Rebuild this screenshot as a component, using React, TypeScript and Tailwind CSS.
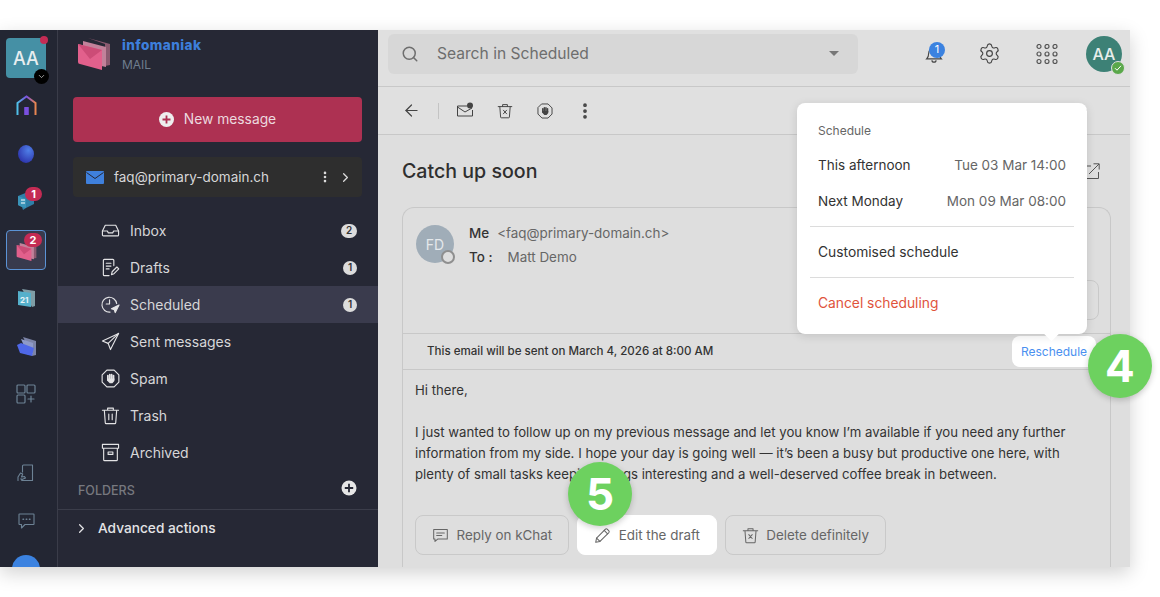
import {
  ArrowLeft,
  ChevronDown,
  ChevronRight,
  MoreVertical,
  Search,
  Settings,
} from "lucide-react";
import type { ReactNode } from "react";

function Ico({ size = 21, sw = 1.2, children }: { size?: number; sw?: number; children: ReactNode }) {
  return (
    <svg width={size} height={size} viewBox="0 0 20 20" fill="none" stroke="currentColor" strokeWidth={sw} strokeLinecap="round" strokeLinejoin="round">
      {children}
    </svg>
  );
}

const InboxIcon = () => (
  <Ico>
    <path d="M1.5 10.5 4.5 4.5h11l3 6v4.2a1 1 0 0 1-1 1h-15a1 1 0 0 1-1-1z" />
    <path d="M1.5 10.5h5.2l1 2h4.6l1-2h5.2" />
  </Ico>
);
const DraftIcon = () => (
  <Ico>
    <path d="M13.5 8V2.5a1 1 0 0 0-1-1h-9a1 1 0 0 0-1 1v15a1 1 0 0 0 1 1h5" />
    <path d="M5.5 5.5h5M5.5 8.5h5M5.5 11.5h3" />
    <path d="m11 17.5.7-3 5-5 2 2-5 5z" />
  </Ico>
);
const ScheduledIcon = () => (
  <Ico>
    <path d="M16.5 9a7.8 7.8 0 1 0-7 9" />
    <path d="M9 5v4.5H5.5" />
    <path d="m19 10.5-8 4 3 1 1 3z" fill="currentColor" />
  </Ico>
);
const SentIcon = () => (
  <Ico>
    <path d="M18.5 1.5 1.5 9.5l6 2.5 2.5 6.5z" />
    <path d="M18.5 1.5 7.5 12" />
  </Ico>
);
const HandStop = ({ size = 21, sw = 1.2 }: { size?: number; sw?: number }) => (
  <Ico size={size} sw={sw}>
    <path d="M6.2 1.2h7.600l5 5v7.600l-5 5H6.200l-5-5V6.200z" />
    <path d="M7.200 7v4M9.200 5.800V10M11.200 5.800V10M13.200 7v4" strokeWidth="1.800" />
    <path d="M6.400 10h7.700v2.500L12 15H9.200L6.400 12z" fill="currentColor" stroke="none" />
  </Ico>
);
const TrashIcon = () => (
  <Ico>
    <path d="M1.5 4.5h17M7 4.5V2.2h6v2.3M3.5 4.5l1 13a1 1 0 0 0 1 1h9a1 1 0 0 0 1-1l1-13" />
    <path d="M8.2 8.5v6M11.8 8.5v6" />
  </Ico>
);
const TrashX = ({ size = 18 }: { size?: number }) => (
  <Ico size={size}>
    <path d="M1.5 4.5h17M7 4.5V2h6v2.5M3.5 4.5l1 13a1 1 0 0 0 1 1h9a1 1 0 0 0 1-1l1-13" />
    <path d="m8 9 4 4.5M12 9l-4 4.5" />
  </Ico>
);
const ArchiveIcon = () => (
  <Ico>
    <path d="M1.5 1.5h17v4h-17zM2.8 5.5v12a1 1 0 0 0 1 1h12.400a1 1 0 0 0 1-1v-12" />
    <path d="M7.500 9.500h5v2.500h-5z" />
  </Ico>
);

const Badge = ({ children, wide }: { children: ReactNode; wide?: boolean }) => (
  <span className={`flex h-[14px] items-center justify-center rounded-full bg-[#dcdcdc] text-[10px] font-semibold text-[#333] ${wide ? "w-4" : "w-[14px]"}`}>
    {children}
  </span>
);

const MailLogo = ({ size = 34 }: { size?: number }) => (
  <svg width={size} height={size} viewBox="0 0 34 34">
    <path d="M11 2 33 8v21l-5 1V8z" fill="#8c5a70" />
    <path d="M6 5 29 11v20l-23-5z" fill="#c2819a" />
    <path d="M1 8 25 14v20L3 28a2 2 0 0 1-2-2z" fill="#e2608c" />
    <path d="M1 8 25 14 13 23z" fill="#cc4c77" />
  </svg>
);

const folders = [
  { label: "Inbox", icon: <InboxIcon />, badge: 2 },
  { label: "Drafts", icon: <DraftIcon />, badge: 1 },
  { label: "Scheduled", icon: <ScheduledIcon />, badge: 1, active: true },
  { label: "Sent messages", icon: <SentIcon /> },
  { label: "Spam", icon: <HandStop /> },
  { label: "Trash", icon: <TrashIcon /> },
  { label: "Archived", icon: <ArchiveIcon /> },
];

function Rail() {
  const slot = "relative flex h-10 w-10 shrink-0 items-center justify-center";
  return (
    <div className="flex w-[58px] shrink-0 flex-col items-center gap-2 overflow-hidden border-r border-[#3a3c49] bg-[#232633] pr-[5px] pt-2">
      <div className="relative flex h-10 w-10 shrink-0 items-center justify-center rounded bg-[#4590a5] text-[18px] font-medium text-[#e8eef0]">
        AA
        <span className="absolute right-[-2px] top-[-2px] h-2 w-2 rounded-full bg-[#c42b54]" />
        <span className="absolute bottom-[-6px] right-[-3px] flex h-[15px] w-[15px] items-center justify-center rounded-full bg-black text-[#ccc]">
          <ChevronDown size={9} />
        </span>
      </div>
      <div className={slot}>
        <svg width="21" height="21" viewBox="0 0 21 21" fill="none" className="mb-[2px]">
          <defs>
            <linearGradient id="homeg" x1="0" x2="1" y1="0" y2="0">
              <stop offset="0" stopColor="#4fc0e8" />
              <stop offset="0.5" stopColor="#7a4fe0" />
              <stop offset="1" stopColor="#e8864f" />
            </linearGradient>
          </defs>
          <path d="M1.500 20V8l9-6.500 9 6.500v12" stroke="url(#homeg)" strokeWidth="2" />
          <rect x="8.200" y="12" width="4.600" height="8" rx="0.500" fill="#7a4fe0" />
        </svg>
      </div>
      <div className={slot}>
        <svg width="18" height="20" viewBox="0 0 18 20">
          <defs>
            <radialGradient id="ball" cx="0.65" cy="0.3" r="0.8">
              <stop offset="0" stopColor="#4f7fe8" />
              <stop offset="1" stopColor="#2a2fa8" />
            </radialGradient>
          </defs>
          <ellipse cx="9" cy="10" rx="8" ry="9" fill="url(#ball)" />
        </svg>
      </div>
      <div className={slot}>
        <svg width="18" height="20" viewBox="0 0 18 20" className="mt-[-3px]">
          <path d="M1 5 11 1l6 3v9l-8 4-3 2-1-3-4-2z" fill="#2f7fa8" />
          <path d="M1 5l8 3v9l-4-1-4-2z" fill="#3a93b8" />
          <path d="M4 9h4M4 12h4" stroke="#fff" strokeWidth="1.200" />
        </svg>
        <span className="absolute right-[4px] top-[5px] flex h-[14px] w-[17px] items-center justify-center rounded-full bg-[#c42b54] text-[11px] font-bold text-white">1</span>
      </div>
      <div className="relative flex h-10 w-10 shrink-0 items-center justify-center rounded border border-[#5b93d6] bg-[#383a4d]">
        <MailLogo size={21} />
        <span className="absolute right-[3px] top-[2px] flex h-[14px] w-[18px] items-center justify-center rounded-full bg-[#c42b54] text-[11px] font-bold text-white">2</span>
      </div>
      <div className={slot}>
        <svg width="19" height="20" viewBox="0 0 19 20">
          <path d="M5 1 18 3v15l-3 1z" fill="#7f9da6" />
          <path d="M1 3l13 2v14L1 17z" fill="#55b0cb" />
          <text x="3" y="15" fontSize="8" fontWeight="700" fill="#e6f3f7" fontFamily="Inter, sans-serif">21</text>
        </svg>
      </div>
      <div className={slot}>
        <svg width="21" height="20" viewBox="0 0 21 20">
          <path d="M7 1l13 4v14l-4 1z" fill="#7c84a8" />
          <path d="M5 3l12 4v11l-5 1z" fill="#8f9ac8" />
          <path d="M1 9l4-2 13 5-2 8-12-3z" fill="#4f68e8" />
        </svg>
      </div>
      <div className={`${slot} text-[#6d8295]`}>
        <svg width="20" height="20" viewBox="0 0 20 20" fill="none" stroke="currentColor" strokeWidth="1.200" strokeLinecap="round">
          <rect x="1" y="1" width="8" height="8" rx="1" />
          <rect x="11" y="1" width="8" height="8" rx="1" />
          <rect x="1" y="11" width="8" height="8" rx="1" />
          <path d="M15 12v6M12 15h6" />
        </svg>
      </div>
      <div className={`${slot} mt-[31px] text-[#6d8295]`}>
        <svg width="18" height="18" viewBox="0 0 18 18" fill="none" stroke="currentColor" strokeWidth="1.100" strokeLinecap="round" strokeLinejoin="round">
          <path d="M5.500 8V2a1 1 0 0 1 1-1h9v13" />
          <path d="M15.500 14v2.500H6a2 2 0 0 1-2-2" />
          <path d="M1 16.500V13l2.500-4 2.200 1-1.200 3 3-.5 1 1.500-3.500 1.500" />
        </svg>
      </div>
      <div className={`${slot} text-[#6d8295]`}>
        <svg width="17" height="16" viewBox="0 0 17 16" fill="none" stroke="currentColor" strokeWidth="1.100" strokeLinejoin="round">
          <path d="M1.500 1h14a.5.5 0 0 1 .5.500V11a.5.5 0 0 1-.5.500H7L3.500 15v-3.500h-2A.5.5 0 0 1 1 11V1.500A.5.5 0 0 1 1.500 1z" />
          <path d="M5 6.200h.6M8.200 6.200h.6M11.400 6.200h.6" strokeWidth="1.400" strokeLinecap="round" />
        </svg>
      </div>
      <div className="mt-[6px] h-7 w-7 shrink-0 rounded-full bg-[#3b82e0]" />
    </div>
  );
}

function Sidebar() {
  return (
    <div className="flex w-[320px] shrink-0 flex-col bg-[#262835] text-[14px] text-[#d6d6d8]">
      <div className="flex h-[67px] items-start gap-[11px] pl-[19px] pt-[6px]">
        <MailLogo />
        <div className="flex flex-col">
          <span className="mt-[1px] text-[13.6px] font-extrabold leading-4 tracking-[0.4px] text-[#3d7fdc]">infomaniak</span>
          <span className="mt-[4px] text-[12px] leading-4 text-[#6f7e8e]">MAIL</span>
        </div>
      </div>
      <div className="ml-[15px] mr-[16px] flex h-[45px] items-center justify-center gap-[10px] rounded bg-[#ad3152] text-[13.8px] text-[#ecd9df]">
        <svg width="15" height="15" viewBox="0 0 15 15">
          <circle cx="7.500" cy="7.500" r="7.500" fill="#eee" />
          <path d="M7.500 3.500v8M3.500 7.500h8" stroke="#ad3152" strokeWidth="1.800" />
        </svg>
        New message
      </div>
      <div className="ml-[15px] mr-[16px] mt-[15px] flex h-10 items-center rounded bg-[#2e2e2e] pl-[13px] pr-[9px] text-[13.5px]">
        <svg width="18" height="13" viewBox="0 0 18 13" className="mr-[10px]">
          <rect width="18" height="13" rx="1" fill="#3f80dc" />
          <path d="M0.500 1.500 9 7.500l8.500-6" fill="none" stroke="#262835" strokeWidth="1" />
        </svg>
        <span>faq@primary-domain.ch</span>
        <MoreVertical size={14} className="ml-auto mr-[6px] text-[#ddd]" strokeWidth={2.500} />
        <ChevronRight size={15} className="text-[#ddd]" />
      </div>
      <div className="mt-[15px] flex flex-col">
        {folders.map((f) => (
          <div key={f.label} className={`flex h-[37px] items-center pl-[43px] pr-[21px] ${f.active ? "bg-[#3a3b4d]" : ""}`}>
            <span className="mr-[10px] flex h-5 w-[19px] items-center justify-center text-[#e3e3e5]">{f.icon}</span>
            <span>{f.label}</span>
            <span className="ml-auto">{f.badge ? <Badge wide={f.badge === 2}>{f.badge}</Badge> : null}</span>
          </div>
        ))}
      </div>
      <div className="flex h-[39px] items-center border-b border-[#3b3d4a] pl-[20px] pr-[21px] pt-[3px]">
        <span className="text-[12.500px] font-medium text-[#77787f]">FOLDERS</span>
        <svg width="16" height="16" viewBox="0 0 16 16" className="ml-auto mt-[-7px]">
          <circle cx="8" cy="8" r="7.500" fill="#e6e6e6" />
          <path d="M8 3.800v8.400M3.800 8h8.400" stroke="#262835" strokeWidth="1.800" />
        </svg>
      </div>
      <div className="mt-[8px] flex items-center pl-[16px] text-[13.7px] font-medium text-[#e3e3e5]">
        <ChevronRight size={15} className="mr-[9px]" />
        Advanced actions
      </div>
    </div>
  );
}

function Popup() {
  const row = "flex items-center justify-between px-[21px]";
  return (
    <div className="absolute left-[419px] top-[73px] h-[231px] w-[290px] rounded-lg bg-white text-[13.8px] text-[#333] shadow-[0_2px_10px_rgba(0,0,0,0.12)]">
      <div className="px-[21px] pt-[20px] text-[12px] leading-4 text-[#666]">Schedule</div>
      <div className={`${row} mt-[16px] h-5 text-[13.5px]`}>
        <span>This afternoon</span>
        <span className="text-[#666]">Tue 03 Mar 14:00</span>
      </div>
      <div className={`${row} mt-[16px] h-5 text-[13.5px]`}>
        <span>Next Monday</span>
        <span className="text-[#666]">Mon 09 Mar 08:00</span>
      </div>
      <div className="mx-[13px] mt-[15px] border-t border-[#dcdcdc]" />
      <div className={`${row} mt-[15px] h-5`}>Customised schedule</div>
      <div className="mx-[13px] mt-[15px] border-t border-[#dcdcdc]" />
      <div className={`${row} mt-[15px] h-5 text-[#e0533c]`}>Cancel scheduling</div>
      <span className="absolute bottom-[-5px] left-[249px] h-[11px] w-[11px] rotate-45 bg-white" />
    </div>
  );
}

const Step = ({ n, className }: { n: number; className: string }) => (
  <div className={`absolute flex h-16 w-16 items-center justify-center rounded-full bg-[#6dd15f] text-[44px] font-bold text-white shadow-[0_2px_6px_rgba(0,0,0,0.2)] ${className}`}>
    {n}
  </div>
);

function ActionButton({ icon, label, light }: { icon: ReactNode; label: string; light?: boolean }) {
  return (
    <div className={`flex h-10 items-center gap-[7.5px] rounded-lg border px-4 text-[13.4px] text-[#666] ${light ? "border-white bg-white" : "border-[#c9c9c9]"}`}>
      {icon}
      {label}
    </div>
  );
}

function Main() {
  return (
    <div className="relative flex min-w-0 flex-1 flex-col bg-[#dedede] text-[13.45px]">
      <div className="flex h-[57px] shrink-0 items-center border-b border-[#c8c8c8] bg-[#e0e0e0] pb-[9px] pl-[10px]">
        <div className="flex h-10 w-[470px] items-center rounded-md bg-[#d7d7d7] pl-[13px] pr-[19px] text-[15.6px] text-[#6e6e6e]">
          <Search size={18} className="mr-[18px]" />
          Search in Scheduled
          <span className="ml-auto h-0 w-0 border-x-[5px] border-t-[5px] border-x-transparent border-t-[#777]" />
        </div>
        <div className="relative ml-[67px] text-[#444]">
          <svg width="18" height="18" viewBox="0 0 22 22" fill="none" stroke="currentColor" strokeWidth="1.400" className="block">
            <path d="M2 17c2-2 2.500-3.500 2.500-7a6.500 6.500 0 0 1 13 0c0 3.500.5 5 2.500 7z" />
            <path d="M8.500 18.500a2.500 2.500 0 0 0 5 0" />
          </svg>
          <span className="absolute left-[4px] top-[-3px] flex h-4 w-4 items-center justify-center rounded-full bg-[#3b82e0] text-[11px] text-white">1</span>
        </div>
        <Settings size={23} strokeWidth={1.200} className="ml-[35px] text-[#444]" />
        <svg width="22" height="20" viewBox="0 0 22 20" fill="none" stroke="#555" strokeWidth="1.200" className="ml-[35px]">
          {[3, 11, 19].map((x) =>
            [2.500, 10, 17.500].map((y) => <circle key={`${x}-${y}`} cx={x} cy={y} r="2" />),
          )}
        </svg>
        <div className="relative ml-[28px] flex h-9 w-9 items-center justify-center rounded-full bg-[#3d8176] text-[16px] font-medium text-[#e8eeec]">
          AA
          <span className="absolute bottom-[-3px] right-[-3px] flex h-[14px] w-[14px] items-center justify-center rounded-full border border-[#e0e0e0] bg-[#5aa84a]">
            <svg width="8" height="8" viewBox="0 0 8 8" fill="none" stroke="#fff" strokeWidth="1">
              <path d="m1 4.200 2 2 4-4.400" />
            </svg>
          </span>
        </div>
      </div>
      <div className="flex h-12 shrink-0 items-center border-b border-[#c8c8c8] bg-[#e0e0e0] pl-[24px] text-[#444]">
        <ArrowLeft size={19} strokeWidth={1.500} />
        <span className="mx-[17px] h-4 border-l border-[#c4c4c4]" />
        <svg width="18" height="18" viewBox="0 0 18 18" fill="none" stroke="currentColor" strokeWidth="1">
          <path d="M11 4H1.500v10h15V8" />
          <path d="m1.500 5 7.500 5 7-4" />
          <circle cx="14" cy="3.500" r="3" fill="currentColor" stroke="none" />
        </svg>
        <span className="ml-[23px]"><TrashX size={16} /></span>
        <span className="ml-[24px]"><HandStop size={16} /></span>
        <MoreVertical size={20} strokeWidth={2.500} className="ml-[22px]" />
        <ChevronRight size={13} strokeWidth={3} className="ml-auto mr-[39px] text-[#666]" />
      </div>
      <div className="flex h-[72px] shrink-0 items-center justify-between pl-6 pr-[30px]">
        <span className="mt-[2px] text-[19.6px] font-medium leading-none text-[#2f2f2f]">Catch up soon</span>
        <svg width="16" height="16" viewBox="0 0 16 16" fill="none" stroke="#555" strokeWidth="1">
          <path d="M14.500 9v6.500h-14V3H7" />
          <path d="M5 11 15 1M9.500.8h5.700v5.700" />
        </svg>
      </div>
      <div className="ml-6 mr-[19px] flex flex-1 flex-col rounded-t-xl border border-b-0 border-[#c8c8c8]">
        <div className="relative h-[125px] shrink-0 px-[13px] pt-[17px]">
          <div className="flex">
            <div className="relative flex h-[38px] w-[38px] shrink-0 items-center justify-center rounded-full bg-[#a0adb8] text-[14px] text-[#e4e8eb]">
              FD
              <span className="absolute bottom-[-1px] right-[-1px] h-[14px] w-[14px] rounded-full border-2 border-[#8f8f8f] bg-[#dedede]" />
            </div>
            <div className="ml-[15px] mt-[-2px] flex flex-col gap-[3px] leading-[21px]">
              <div className="text-[#666]">
                <span className="mr-2 font-medium text-[#333]">Me</span>&lt;faq@primary-domain.ch&gt;
              </div>
              <div className="text-[#666]">
                <span className="mr-[15px] font-medium text-[#333]">To :</span>Matt Demo
              </div>
            </div>
          </div>
          <div className="absolute right-[11px] top-[72px] h-10 w-[120px] rounded-lg border border-[#c9c9c9]" />
        </div>
        <div className="flex h-[37px] shrink-0 items-center justify-between border-y border-[#c8c8c8] pl-[24px] pr-[14px]">
          <span className="text-[11.55px] font-medium text-[#333]">This email will be sent on March 4, 2026 at 8:00 AM</span>
          <span className="flex h-[31px] w-[84px] items-center justify-center rounded-lg bg-white text-[12px] text-[#4a90f0]">Reschedule</span>
        </div>
        <div className="px-3 pt-[10px] text-[13.2px] leading-[21px] text-[#333]">
          <p>Hi there,</p>
          <p className="mt-[21px]">
            I just wanted to follow up on my previous message and let you know I’m available if you need any further
            <br />
            information from my side. I hope your day is going well — it’s been a busy but productive one here, with
            <br />
            plenty of small tasks keeping things interesting and a well-deserved coffee break in between.
          </p>
        </div>
        <div className="mt-[30px] flex gap-2 px-3">
          <ActionButton
            label="Reply on kChat"
            icon={
              <Ico size={17}>
                <path d="M2 3h16v11H7l-3.500 3v-3H2z" />
                <path d="M5.500 7h9M5.500 10h6" />
              </Ico>
            }
          />
          <ActionButton
            light
            label="Edit the draft"
            icon={
              <Ico size={17}>
                <path d="m2 18 1-5L13.500 2.500a1.500 1.500 0 0 1 2 0l2 2a1.500 1.500 0 0 1 0 2L7 17z" />
                <path d="m12 4 4 4M3 13l4 4" />
              </Ico>
            }
          />
          <ActionButton label="Delete definitely" icon={<TrashX size={17} />} />
        </div>
      </div>
      <Popup />
      <Step n={4} className="left-[710px] top-[304px]" />
      <Step n={5} className="left-[190px] top-[432px]" />
    </div>
  );
}

export default function App() {
  return (
    <div className="h-[597px] w-[1160px] overflow-hidden bg-white pt-[30px] font-['Inter',sans-serif]">
      <div className="flex h-[537px] w-[1130px] shadow-[0_6px_18px_rgba(0,0,0,0.18)]">
        <Rail />
        <Sidebar />
        <Main />
      </div>
    </div>
  );
}
